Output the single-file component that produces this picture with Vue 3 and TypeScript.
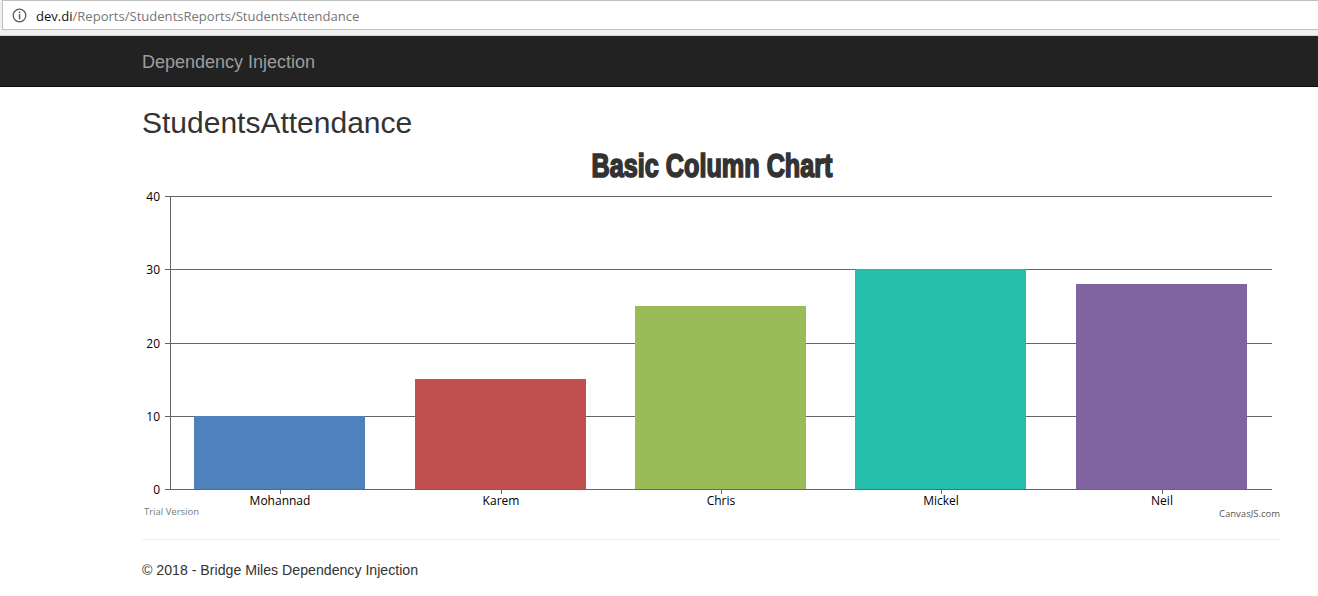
<script setup lang="ts">
const baseY = 489
const unit = 7.325
const ticks = [40, 30, 20, 10, 0]
const bars = [
  { name: 'Mohannad', value: 10, x: 194, color: '#4f81bc' },
  { name: 'Karem', value: 15, x: 415, color: '#c0504e' },
  { name: 'Chris', value: 25, x: 635, color: '#9bbb58' },
  { name: 'Mickel', value: 30, x: 855, color: '#23bfaa' },
  { name: 'Neil', value: 28, x: 1076, color: '#8064a1' },
]
const tickY = (v: number) => Math.round(baseY - v * unit) + 0.5
const barY = (v: number) => Math.round(baseY - v * unit)
</script>

<template>
  <div class="page">
    <div class="browser">
      <div class="address">
        <svg class="info" width="15" height="15" viewBox="0 0 15 15">
          <circle cx="7.5" cy="7.5" r="6.3" fill="none" stroke="#5a5a5a" stroke-width="1.3" />
          <rect x="6.8" y="3.6" width="1.5" height="1.5" fill="#5a5a5a" />
          <rect x="6.8" y="6.2" width="1.5" height="5" fill="#5a5a5a" />
        </svg>
        <span class="url"><span class="host">dev.di</span>/Reports/StudentsReports/StudentsAttendance</span>
      </div>
    </div>
    <nav class="navbar">
      <div class="container"><span class="brand">Dependency Injection</span></div>
    </nav>
    <main class="container">
      <h2 class="heading">StudentsAttendance</h2>
      <svg class="chart" width="1139" height="380" viewBox="142 146 1139 380">
        <text class="title" x="712" y="177" text-anchor="middle" textLength="241" lengthAdjust="spacingAndGlyphs">Basic Column Chart</text>
        <g v-for="t in ticks" :key="t">
          <line x1="165" x2="1272" :y1="tickY(t)" :y2="tickY(t)" stroke="#666" stroke-width="1" />
          <text class="label" x="160" :y="tickY(t) + 4.5" text-anchor="end">{{ t }}</text>
        </g>
        <line x1="170.5" x2="170.5" y1="196" y2="490" stroke="#666" stroke-width="1" />
        <g v-for="b in bars" :key="b.name">
          <rect :x="b.x" :y="barY(b.value)" width="171" :height="baseY - barY(b.value)" :fill="b.color" />
          <line :x1="b.x + 86.5" :x2="b.x + 86.5" y1="490" y2="494" stroke="#666" stroke-width="1" />
          <text class="label" :x="b.x + 86" y="505" text-anchor="middle">{{ b.name }}</text>
        </g>
        <text class="trial" x="144" y="515">Trial Version</text>
        <text class="credit" x="1280" y="517" text-anchor="end">CanvasJS.com</text>
      </svg>
      <hr class="rule" />
      <footer class="footer">© 2018 - Bridge Miles Dependency Injection</footer>
    </main>
  </div>
</template>

<style>
html, body { margin: 0; background: #fff; overflow: hidden; }
</style>

<style scoped>
.page {
  width: 1318px;
  height: 596px;
  overflow: hidden;
  background: #fff;
  font-family: "Liberation Sans", Arial, sans-serif;
  color: #333;
}
.browser {
  height: 36px;
  background: #f0f0f0;
  box-sizing: border-box;
  border-bottom: 1px solid #d4d4d4;
}
.address {
  height: 30px;
  box-sizing: border-box;
  margin-left: 2px;
  margin-right: -2px;
  border: 1px solid #c0c0c0;
  background: #fff;
  display: flex;
  align-items: center;
  padding-left: 9px;
}
.info { flex: none; }
.url {
  margin-left: 9px;
  margin-top: 2px;
  font: 13.05px "Open Sans", "Noto Sans", sans-serif;
  color: #767676;
}
.host { color: #111; }
.navbar {
  height: 51px;
  box-sizing: border-box;
  background: #222;
  border-bottom: 1px solid #080808;
}
.container { width: 1139px; margin-left: 142px; }
.brand { display: block; font-size: 18px; line-height: 52px; color: #9d9d9d; }
.heading {
  margin: 19px 0 0;
  font-size: 30px;
  font-weight: 500;
  line-height: 33px;
  color: #333;
}
.chart { display: block; margin-top: 7px; }
.title {
  font-family: "Liberation Sans", sans-serif;
  font-size: 33px;
  font-weight: 700;
  fill: #333;
  stroke: #333;
  stroke-width: 1.7px;
}
.label { font-family: "Open Sans", "Noto Sans", sans-serif; font-size: 12px; fill: #000; }
.trial { font-family: "Open Sans", "Noto Sans", sans-serif; font-size: 9.5px; fill: #7a7a7a; }
.credit { font-family: "Open Sans", "Noto Sans", sans-serif; font-size: 9.5px; fill: #555; }
.rule { margin: 13px 0 0; border: 0; border-top: 1px solid #eee; }
.footer { margin-top: 20px; font-size: 14.15px; line-height: 20px; color: #333; }
</style>
